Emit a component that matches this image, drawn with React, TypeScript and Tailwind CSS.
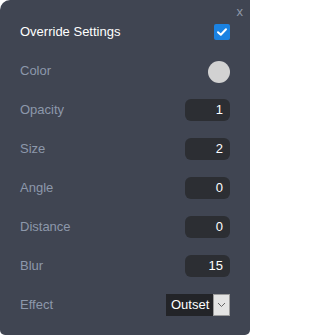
import React from "react";

function NumBox({ value }: { value: string }) {
  return (
    <div className="w-[45px] h-[22px] rounded-[6px] bg-[#2c2e33] text-white text-[13px] leading-[22px] text-right pr-[7px]">
      {value}
    </div>
  );
}

function Row({ label, children }: { label: string; children: React.ReactNode }) {
  return (
    <div className="h-[39px] flex items-center justify-between">
      <span className="text-[13px] text-[#8d98ab]">{label}</span>
      {children}
    </div>
  );
}

export default function App() {
  return (
    <div
      className="relative w-[250px] h-[335px] bg-[#404552] rounded-tl-[10px] rounded-b-[5px] px-[20px] pt-[12px] flex flex-col"
      style={{ fontFamily: '"Liberation Sans", Arial, sans-serif' }}
    >
      <span className="absolute top-[5px] right-[7px] text-[13px] text-[#8f98a8] leading-none">x</span>
      <div className="h-[39px] flex items-center justify-between">
        <span className="text-[13px] text-white">Override Settings</span>
        <div className="w-[16px] h-[16px] rounded-[2px] bg-[#1a82e2] flex items-center justify-center">
          <svg width="12" height="12" viewBox="0 0 12 12">
            <path d="M2 6.2 L4.8 8.8 L10 3.2" fill="none" stroke="white" strokeWidth="2" strokeLinecap="round" strokeLinejoin="round" />
          </svg>
        </div>
      </div>
      <Row label="Color">
        <div className="w-[22px] h-[22px] rounded-full bg-[#d2d2d2] mt-[3px]" />
      </Row>
      <Row label="Opacity"><NumBox value="1" /></Row>
      <Row label="Size"><NumBox value="2" /></Row>
      <Row label="Angle"><NumBox value="0" /></Row>
      <Row label="Distance"><NumBox value="0" /></Row>
      <Row label="Blur"><NumBox value="15" /></Row>
      <Row label="Effect">
        <div className="flex h-[22px]">
          <div className="w-[47px] bg-[#232428] text-white text-[13px] leading-[22px] pl-[5px]">Outset</div>
          <div className="w-[17px] bg-[#e4e4e4] border border-[#9c9c9c] flex items-center justify-center">
            <svg width="9" height="6" viewBox="0 0 9 6">
              <path d="M1 1 L4.5 4.5 L8 1" fill="none" stroke="#666" strokeWidth="1" />
            </svg>
          </div>
        </div>
      </Row>
    </div>
  );
}
